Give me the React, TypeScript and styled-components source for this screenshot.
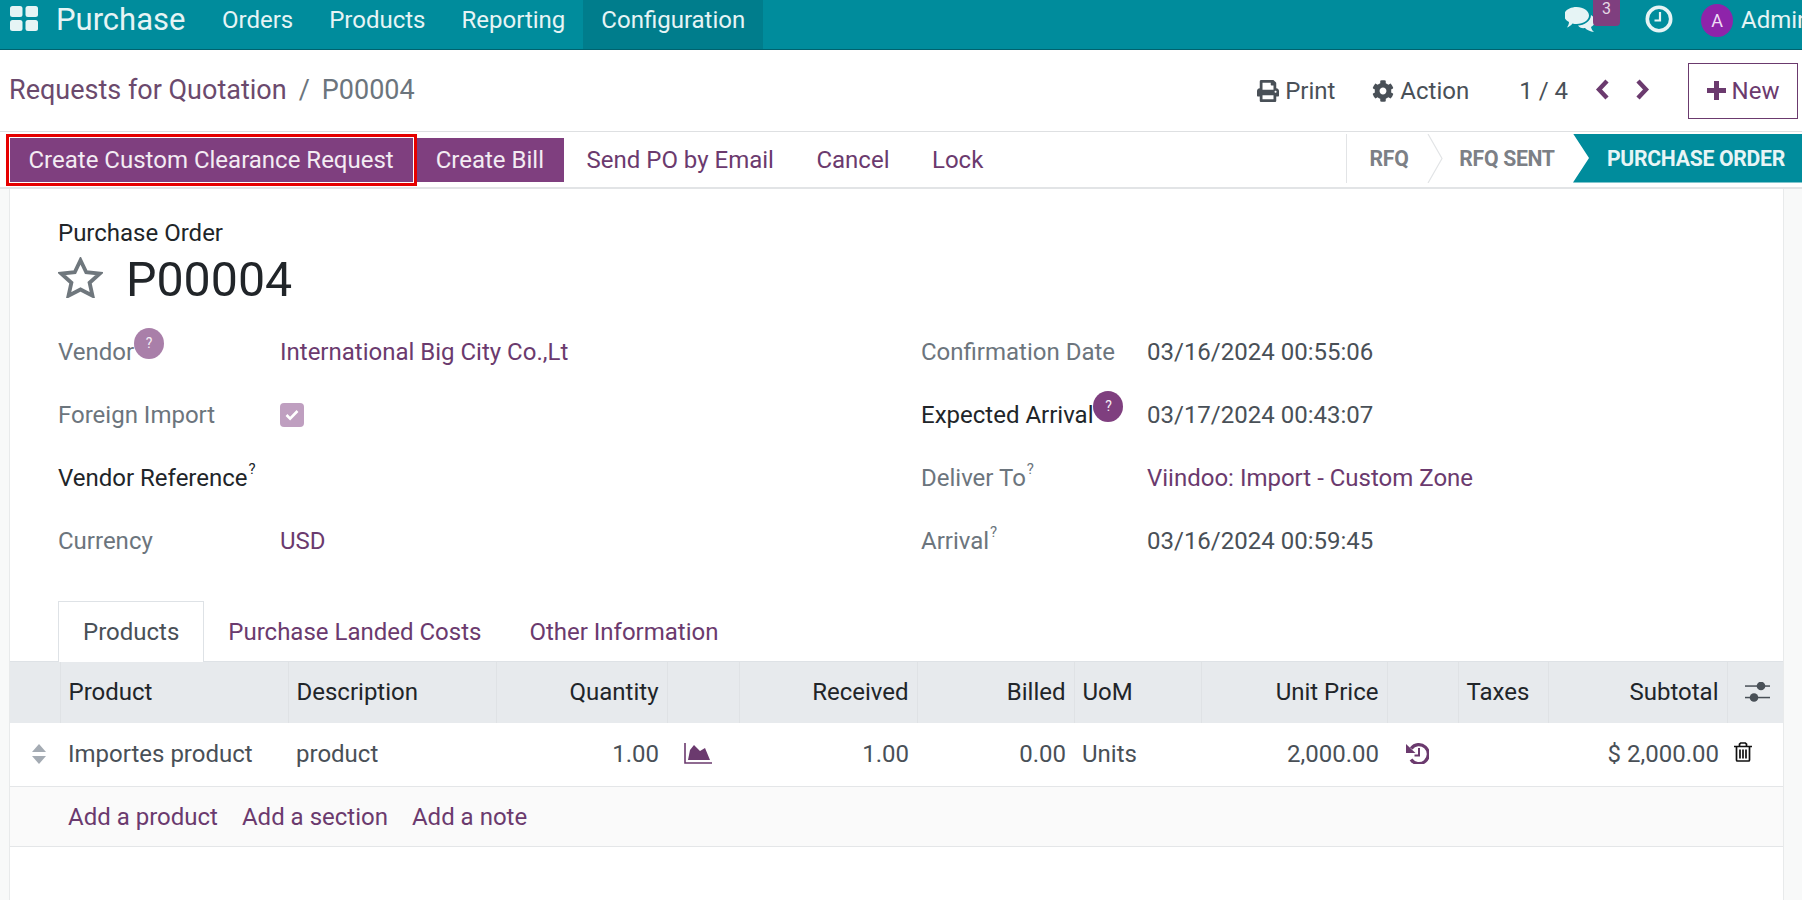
import React from "react";
import styled, { createGlobalStyle } from "styled-components";
import { FaCog, FaPrint } from "react-icons/fa";

const PURPLE = "#7f3f7f";
const LINK = "#6b3a6e";
const TEAL = "#008c9c";
const ICON_LIGHT = "#e6f4f5";

const GlobalStyle = createGlobalStyle`
  html, body {
    margin: 0;
    padding: 0;
    background: #fff;
  }
  body {
    font-family: Roboto, "Liberation Sans", sans-serif;
    font-size: 24px;
    color: #495057;
  }
  * {
    box-sizing: border-box;
  }
`;

const Page = styled.div`
  width: 1802px;
  height: 900px;
  overflow: hidden;
  display: flex;
  flex-direction: column;
`;

const Navbar = styled.nav`
  flex: 0 0 50px;
  display: flex;
  align-items: stretch;
  background: ${TEAL};
  border-bottom: 1px solid #00626e;
  color: ${ICON_LIGHT};
  white-space: nowrap;
`;

const AppsIcon = styled.svg`
  width: 28px;
  height: 25px;
  margin: 6px 18px 0 10px;
`;

const Brand = styled.div`
  font-size: 31px;
  line-height: 40px;
  width: 130px;
  margin-right: 18px;
`;

const NavItem = styled.div<{ $active?: boolean }>`
  padding: 0 18px;
  line-height: 41px;
  font-size: 24px;
  background: ${(p) => (p.$active ? "#007d8c" : "transparent")};
`;

const NavRight = styled.div`
  margin-left: auto;
  display: flex;
  align-items: flex-start;
  flex: 0 0 237px;
  overflow: hidden;
`;

const Chat = styled.div`
  position: relative;
  flex: 0 0 81px;
  margin-left: -1px;
  padding-top: 7px;
  line-height: 0;
`;

const ChatIcon = styled.svg`
  width: 32px;
  height: 26px;
`;

const Badge = styled.span`
  position: absolute;
  left: 29px;
  top: 0;
  width: 27px;
  height: 26px;
  background: ${PURPLE};
  border-radius: 0 0 4px 4px;
  color: #e6d9e6;
  font-size: 16px;
  line-height: 17px;
  text-align: center;
`;

const ClockIcon = styled.svg`
  flex: none;
  width: 28px;
  height: 28px;
  margin-top: 5px;
  margin-right: 28px;
`;

const Avatar = styled.span`
  flex: 0 0 32px;
  height: 33px;
  margin-top: 4px;
  border-radius: 50%;
  background: #8e24aa;
  color: #f0dcf5;
  font-size: 18px;
  line-height: 33px;
  text-align: center;
`;

const UserName = styled.span`
  margin-left: 8px;
  line-height: 41px;
`;

const ControlPanel = styled.div`
  flex: 0 0 82px;
  display: flex;
  align-items: center;
  padding: 0 4px 0 9px;
  border-bottom: 1px solid #dee0e2;
`;

const Breadcrumb = styled.div`
  display: flex;
  align-items: center;
  font-size: 27px;
  color: #6c757d;
  margin-top: -2px;
`;

const CrumbLink = styled.span`
  color: #6b4a6d;
`;

const CrumbSlash = styled.span`
  margin: 0 12px;
`;

const PanelActions = styled.div`
  margin-left: auto;
  display: flex;
  align-items: center;
`;

const PanelAction = styled.span`
  display: flex;
  align-items: center;
  gap: 6px;
  margin-right: 37px;
  svg {
    font-size: 22px;
  }
`;

const Pager = styled.span`
  margin-left: 13px;
  margin-right: 27px;
`;

const PagerIcon = styled.svg`
  flex: none;
  width: 15px;
  height: 21px;
  margin-right: 25px;
  margin-top: -2px;
`;

const NewButton = styled.button`
  width: 110px;
  height: 56px;
  margin-left: 13px;
  display: flex;
  align-items: center;
  justify-content: center;
  gap: 6px;
  background: #fff;
  border: 1px solid ${LINK};
  color: ${LINK};
  font: inherit;
`;

const PlusIcon = styled.svg`
  width: 19px;
  height: 19px;
`;

const Toolbar = styled.div`
  flex: 0 0 57px;
  display: flex;
  align-items: center;
  border-bottom: 2px solid #e2e4e6;
`;

const ActionBar = styled.div`
  display: flex;
  align-items: center;
  padding-left: 6px;
`;

const Highlight = styled.div`
  border: 3px solid #e60000;
  padding: 1px;
  background: #fff;
  display: flex;
`;

const PrimaryButton = styled.button`
  height: 44px;
  padding: 0 19.5px 0 18.5px;
  border: none;
  background: ${PURPLE};
  color: #f3ecf3;
  font: inherit;
  white-space: nowrap;
`;

const LinkButton = styled.span`
  margin-left: 42.5px;
  color: ${LINK};
  &:first-of-type {
    margin-left: 23px;
  }
`;

const StatusBar = styled.div`
  margin-left: auto;
  height: 49px;
  margin-top: -3px;
  display: flex;
  align-items: center;
  border-left: 1px solid #e2e4e6;
  font-weight: 700;
  font-size: 21.2px;
  letter-spacing: -0.3px;
  color: #7c8086;
`;

const StatusStep = styled.span<{ $width: number; $indent?: number }>`
  width: ${(p) => p.$width}px;
  padding-left: ${(p) => p.$indent ?? 0}px;
  text-align: center;
`;

const StatusChevron = styled.svg`
  width: 16px;
  height: 49px;
  flex: none;
`;

const StatusCurrent = styled.div`
  width: 229px;
  height: 49px;
  margin-left: 2px;
  padding-left: 34px;
  line-height: 49px;
  background: ${TEAL};
  color: #e8f5f6;
  clip-path: polygon(0 0, 100% 0, 100% 100%, 0 100%, 16px 50%);
`;

const Content = styled.div`
  flex: 1;
  min-height: 0;
  background: #f8f9f9;
  padding: 0 18px 0 9px;
`;

const Sheet = styled.div`
  height: 100%;
  background: #fff;
  border-left: 1px solid #e8eaeb;
  border-right: 1px solid #e8eaeb;
`;

const SheetHeader = styled.div`
  padding: 31px 0 0 48px;
`;

const DocLabel = styled.div`
  line-height: 27px;
  color: #212529;
`;

const TitleRow = styled.div`
  display: flex;
  align-items: center;
  gap: 23px;
  height: 46px;
  margin-top: 8px;
`;

const StarIcon = styled.svg`
  width: 45px;
  height: 41px;
  margin-top: -2px;
`;

const DocNumber = styled.h1`
  margin: 2px 0 0;
  font-size: 48.3px;
  font-weight: 400;
  color: #212529;
`;

const FormGrid = styled.div`
  display: grid;
  grid-template-columns: 222px 641px 226px 1fr;
  grid-auto-rows: 63px;
  padding: 19px 0 0 48px;
  margin-bottom: 29px;
`;

const FieldLabel = styled.div<{ $strong?: boolean }>`
  display: flex;
  align-items: center;
  color: ${(p) => (p.$strong ? "#212529" : "#6c757d")};
`;

const FieldValue = styled.div<{ $link?: boolean }>`
  display: flex;
  align-items: center;
  color: ${(p) => (p.$link ? LINK : "#495057")};
`;

const HelpMark = styled.sup`
  align-self: flex-start;
  margin: 14px 0 0 1px;
  font-size: 15px;
  line-height: 18px;
`;

const HelpBubble = styled.span<{ $faded?: boolean }>`
  align-self: flex-start;
  width: 30px;
  height: 31px;
  margin-top: 8px;
  border-radius: 50%;
  background: ${(p) => (p.$faded ? "#a97fa9" : PURPLE)};
  color: #f5eef5;
  font-size: 14px;
  line-height: 30px;
  text-align: center;
`;

const CheckBox = styled.span`
  width: 24px;
  height: 24px;
  border-radius: 4px;
  background: #bf9fc0;
  display: flex;
  align-items: center;
  justify-content: center;
`;

const Tabs = styled.div`
  display: flex;
  padding-left: 48px;
  height: 61px;
  margin-bottom: -1px;
  position: relative;
`;

const Tab = styled.div<{ $active?: boolean }>`
  padding: 0 ${(p) => (p.$active ? "24px" : "23px")};
  height: 61px;
  line-height: 60px;
  color: ${(p) => (p.$active ? "#495057" : LINK)};
  background: ${(p) => (p.$active ? "#fff" : "transparent")};
  border: 1px solid ${(p) => (p.$active ? "#dee2e6" : "transparent")};
  border-bottom: none;
`;

const Table = styled.table`
  width: 100%;
  table-layout: fixed;
  border-collapse: collapse;
  border-top: 1px solid #dee2e6;
`;

const HeadCell = styled.th<{ $right?: boolean }>`
  height: 61px;
  padding: 0 8px;
  background: #e7eaed;
  border-right: 1px solid #dfe2e5;
  font-weight: 400;
  color: #212529;
  text-align: ${(p) => (p.$right ? "right" : "left")};
  &:last-child {
    border-right: none;
  }
`;

const BodyCell = styled.td<{ $right?: boolean; $flush?: boolean }>`
  height: 64px;
  padding: 0 ${(p) => (p.$flush ? 0 : "8px")} 1px;
  border-bottom: 1px solid #e4e6e8;
  text-align: ${(p) => (p.$right ? "right" : "left")};
  white-space: nowrap;
`;

const AddCell = styled.td`
  height: 60px;
  padding: 0 8px;
  background: #fafafa;
  border-bottom: 1px solid #e4e6e8;
`;

const AddLinks = styled.div`
  display: flex;
  gap: 24px;
  color: ${LINK};
`;

const Handle = styled.svg`
  display: block;
  width: 14px;
  height: 20px;
  margin-left: 22px;
`;

const ChartIcon = styled.svg`
  display: block;
  width: 28px;
  height: 21px;
  margin-left: 9px;
`;

const HistoryIcon = styled.svg`
  display: block;
  width: 23px;
  height: 23px;
  margin: -2px 0 0 11px;
`;

const SlidersIcon = styled.svg`
  display: block;
  width: 25px;
  height: 20px;
  margin-left: 9px;
`;

const TrashIcon = styled.svg`
  display: block;
  width: 18px;
  height: 20px;
  margin-left: -1px;
  margin-top: -3px;
`;

const columns: { label: string; width: number; right?: boolean }[] = [
  { label: "", width: 50 },
  { label: "Product", width: 228 },
  { label: "Description", width: 208 },
  { label: "Quantity", width: 171, right: true },
  { label: "", width: 72 },
  { label: "Received", width: 178, right: true },
  { label: "Billed", width: 157, right: true },
  { label: "UoM", width: 127 },
  { label: "Unit Price", width: 186, right: true },
  { label: "", width: 71 },
  { label: "Taxes", width: 90 },
  { label: "Subtotal", width: 179, right: true },
];

const App: React.FC = () => {
  return (
    <Page>
      <GlobalStyle />
      <Navbar>
        <AppsIcon viewBox="0 0 28 25" fill={ICON_LIGHT}>
          <rect x="0" y="0" width="12.5" height="11" rx="2.5" />
          <rect x="15.5" y="0" width="12.5" height="11" rx="2.5" />
          <rect x="0" y="14" width="12.5" height="11" rx="2.5" />
          <rect x="15.5" y="14" width="12.5" height="11" rx="2.5" />
        </AppsIcon>
        <Brand>Purchase</Brand>
        <NavItem>Orders</NavItem>
        <NavItem>Products</NavItem>
        <NavItem>Reporting</NavItem>
        <NavItem $active>Configuration</NavItem>
        <NavRight>
          <Chat>
            <ChatIcon viewBox="0 0 32 26" fill={ICON_LIGHT}>
              <path d="M14 18.500C20 18.500 27 14 27 8C30 10 31 12 31 14C31 17 29 19 27 20C27.500 22 28.500 24 30 25C26 24.500 23 23 21 21C18 21.500 15 20.500 14 18.500Z" />
              <path d="M12.500 0C19.400 0 25 3.800 25 8.500C25 13.200 19.400 17 12.500 17C11 17 10 17 8.500 16.500C7 18.500 4.500 20 3 20.500C4 19 5 17 5 15C2 13.500 0 11 0 8.500C0 3.800 5.600 0 12.500 0Z" />
            </ChatIcon>
            <Badge>3</Badge>
          </Chat>
          <ClockIcon viewBox="0 0 28 28">
            <circle cx="14" cy="14" r="11.7" fill="none" stroke={ICON_LIGHT} strokeWidth="3.6" />
            <path d="M15 7v8.500H9.500" fill="none" stroke={ICON_LIGHT} strokeWidth="2.2" />
          </ClockIcon>
          <Avatar>A</Avatar>
          <UserName>Admin</UserName>
        </NavRight>
      </Navbar>

      <ControlPanel>
        <Breadcrumb>
          <CrumbLink>Requests for Quotation</CrumbLink>
          <CrumbSlash>/</CrumbSlash>
          <span>P00004</span>
        </Breadcrumb>
        <PanelActions>
          <PanelAction>
            <FaPrint />
            Print
          </PanelAction>
          <PanelAction>
            <FaCog />
            Action
          </PanelAction>
          <Pager>1 / 4</Pager>
          <PagerIcon viewBox="0 0 15 21">
            <path d="M12 2L4 10.500L12 19" fill="none" stroke={LINK} strokeWidth="4.4" />
          </PagerIcon>
          <PagerIcon viewBox="0 0 15 21">
            <path d="M3 2L11 10.500L3 19" fill="none" stroke={LINK} strokeWidth="4.4" />
          </PagerIcon>
          <NewButton>
            <PlusIcon viewBox="0 0 19 19" fill={LINK}>
              <path d="M7 0h5v7h7v5h-7v7H7v-7H0V7h7z" />
            </PlusIcon>
            New
          </NewButton>
        </PanelActions>
      </ControlPanel>

      <Toolbar>
        <ActionBar>
          <Highlight>
            <PrimaryButton>Create Custom Clearance Request</PrimaryButton>
          </Highlight>
          <PrimaryButton>Create Bill</PrimaryButton>
          <LinkButton>Send PO by Email</LinkButton>
          <LinkButton>Cancel</LinkButton>
          <LinkButton>Lock</LinkButton>
        </ActionBar>
        <StatusBar>
          <StatusStep $width={80} $indent={4}>
            RFQ
          </StatusStep>
          <StatusChevron viewBox="0 0 16 49">
            <path d="M1 0l14 24.500L1 49" fill="none" stroke="#e2e4e6" strokeWidth="1.2" />
          </StatusChevron>
          <StatusStep $width={128}>RFQ SENT</StatusStep>
          <StatusCurrent>PURCHASE ORDER</StatusCurrent>
        </StatusBar>
      </Toolbar>

      <Content>
        <Sheet>
          <SheetHeader>
            <DocLabel>Purchase Order</DocLabel>
            <TitleRow>
              <StarIcon viewBox="0 0 47 42">
                <path
                  d="M23.500 3L29.500 15.500L43.500 17L33 26.500L36 40L23.500 33.500L11 40L14 26.500L3.500 17L17.500 15.500Z"
                  fill="none"
                  stroke="#6f777d"
                  strokeWidth="4"
                />
              </StarIcon>
              <DocNumber>P00004</DocNumber>
            </TitleRow>
          </SheetHeader>

          <FormGrid>
            <FieldLabel>
              Vendor
              <HelpBubble $faded>?</HelpBubble>
            </FieldLabel>
            <FieldValue $link>International Big City Co.,Lt</FieldValue>
            <FieldLabel>Confirmation Date</FieldLabel>
            <FieldValue>03/16/2024 00:55:06</FieldValue>

            <FieldLabel>Foreign Import</FieldLabel>
            <FieldValue>
              <CheckBox>
                <svg width="14" height="12" viewBox="0 0 14 12">
                  <path d="M1.500 6l3.600 3.600L12.500 2" fill="none" stroke="#fff" strokeWidth="2.6" />
                </svg>
              </CheckBox>
            </FieldValue>
            <FieldLabel $strong>
              Expected Arrival
              <HelpBubble>?</HelpBubble>
            </FieldLabel>
            <FieldValue>03/17/2024 00:43:07</FieldValue>

            <FieldLabel $strong>
              Vendor Reference
              <HelpMark>?</HelpMark>
            </FieldLabel>
            <FieldValue />
            <FieldLabel>
              Deliver To
              <HelpMark>?</HelpMark>
            </FieldLabel>
            <FieldValue $link>Viindoo: Import - Custom Zone</FieldValue>

            <FieldLabel>Currency</FieldLabel>
            <FieldValue $link>USD</FieldValue>
            <FieldLabel>
              Arrival
              <HelpMark>?</HelpMark>
            </FieldLabel>
            <FieldValue>03/16/2024 00:59:45</FieldValue>
          </FormGrid>

          <Tabs>
            <Tab $active>Products</Tab>
            <Tab>Purchase Landed Costs</Tab>
            <Tab>Other Information</Tab>
          </Tabs>

          <Table>
            <colgroup>
              {columns.map((col, i) => (
                <col key={i} width={col.width} />
              ))}
              <col />
            </colgroup>
            <thead>
              <tr>
                {columns.map((col, i) => (
                  <HeadCell key={i} $right={col.right}>
                    {col.label}
                  </HeadCell>
                ))}
                <HeadCell>
                  <SlidersIcon viewBox="0 0 25 20" fill="#495057">
                    <rect x="0" y="3.300" width="25" height="1.500" />
                    <rect x="0" y="14.800" width="25" height="1.500" />
                    <circle cx="16" cy="4" r="4.300" />
                    <circle cx="9" cy="15.500" r="4.300" />
                  </SlidersIcon>
                </HeadCell>
              </tr>
            </thead>
            <tbody>
              <tr>
                <BodyCell $flush>
                  <Handle viewBox="0 0 14 20" fill="#a4abb3">
                    <path d="M7 0l7 8H0z" />
                    <path d="M7 20l7-8H0z" />
                  </Handle>
                </BodyCell>
                <BodyCell>Importes product</BodyCell>
                <BodyCell>product</BodyCell>
                <BodyCell $right>1.00</BodyCell>
                <BodyCell>
                  <ChartIcon viewBox="0 0 28 21">
                    <path d="M1 0v20h27" fill="none" stroke={LINK} strokeWidth="1.600" />
                    <path d="M4 17L6 7L10 2L16 8L21 5L26 17Z" fill={LINK} />
                  </ChartIcon>
                </BodyCell>
                <BodyCell $right>1.00</BodyCell>
                <BodyCell $right>0.00</BodyCell>
                <BodyCell>Units</BodyCell>
                <BodyCell $right>2,000.00</BodyCell>
                <BodyCell>
                  <HistoryIcon viewBox="0 0 23 23">
                    <path d="M5.200 7.500A9.500 9.500 0 1 1 5 18.500" fill="none" stroke={LINK} strokeWidth="3.200" />
                    <path d="M0 3L9.500 12H0z" fill={LINK} />
                    <path d="M13 7v7.500H8.500" fill="none" stroke={LINK} strokeWidth="2" />
                  </HistoryIcon>
                </BodyCell>
                <BodyCell />
                <BodyCell $right>$ 2,000.00</BodyCell>
                <BodyCell>
                  <TrashIcon viewBox="0 0 18 20">
                    <path
                      d="M0 4.500h18M5.500 4.500V2.200L6.700 1h4.600l1.200 1.200v2.300M2.500 4.500v13.500a1 1 0 0 0 1 1h11a1 1 0 0 0 1-1V4.500M6 7.500v9M9 7.500v9M12 7.500v9"
                      fill="none"
                      stroke="#111"
                      strokeWidth="1.700"
                    />
                  </TrashIcon>
                </BodyCell>
              </tr>
              <tr>
                <AddCell />
                <AddCell colSpan={12}>
                  <AddLinks>
                    <span>Add a product</span>
                    <span>Add a section</span>
                    <span>Add a note</span>
                  </AddLinks>
                </AddCell>
              </tr>
            </tbody>
          </Table>
        </Sheet>
      </Content>
    </Page>
  );
};

export default App;
